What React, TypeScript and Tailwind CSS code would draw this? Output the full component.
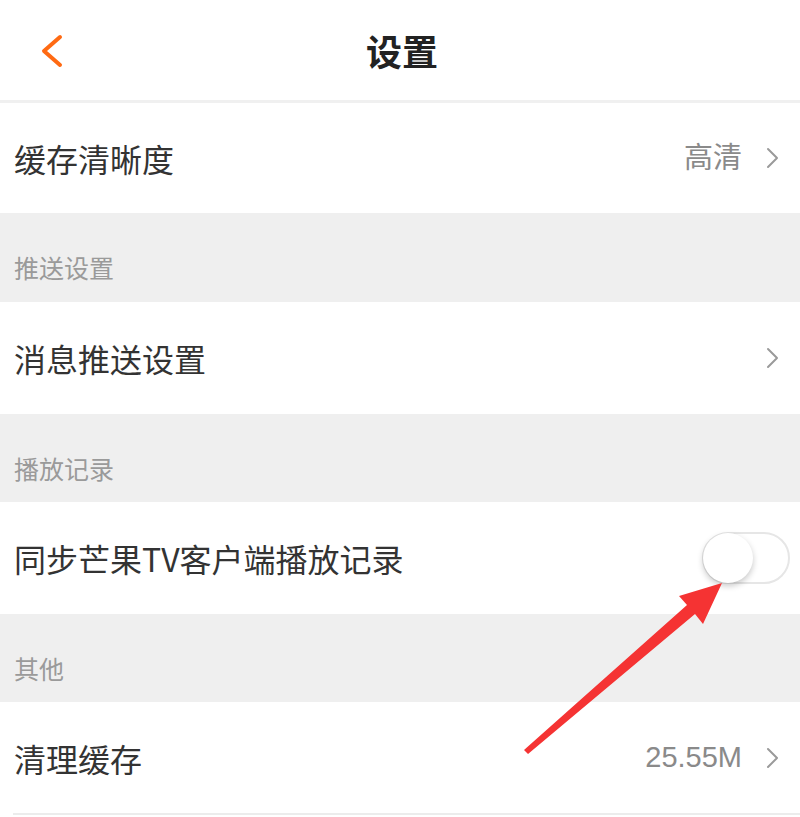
import { useState } from 'react'

const font = { fontFamily: '"Noto Sans CJK SC", "Noto Sans", sans-serif' }
const valueFont = { fontFamily: '"Liberation Sans", "Noto Sans CJK SC", sans-serif' }

function Chevron() {
  return (
    <svg width="14" height="22" viewBox="0 0 14 22" className="ml-[24px] shrink-0">
      <path d="M2 2 L11 11 L2 20" fill="none" stroke="#9a9a9a" strokeWidth="2" strokeLinecap="round" strokeLinejoin="round" />
    </svg>
  )
}

function SectionLabel({ label, h }: { label: string; h: string }) {
  return (
    <div className={`${h} bg-[#efefef] pl-[14px] pt-[42px]`}>
      <p className="text-[25px] leading-none text-[#9a9a9a]">{label}</p>
    </div>
  )
}

function Row({ label, value, arrow = true, h, children }: { label: string; value?: string; arrow?: boolean; h: string; children?: React.ReactNode }) {
  return (
    <div className={`${h} flex items-center bg-white pl-[14px] pr-[20px]`}>
      <p className="flex-1 text-[32px] leading-none text-[#333]">{label}</p>
      {value ? (
        <span className="text-[29px] leading-none text-[#8a8a8a]" style={valueFont}>
          {value}
        </span>
      ) : null}
      {arrow ? <Chevron /> : null}
      {children}
    </div>
  )
}

export default function App() {
  const [sync, setSync] = useState(false)

  return (
    <div className="relative h-[817px] w-[800px] overflow-hidden bg-white" style={font}>
      <header className="relative flex h-[100px] items-center justify-center">
        <button type="button" className="absolute left-[40px] top-[34px]">
          <svg width="24" height="34" viewBox="0 0 24 34">
            <path d="M20 3 L4 17 L20 31" fill="none" stroke="#ff6a13" strokeWidth="4" strokeLinecap="round" strokeLinejoin="round" />
          </svg>
        </button>
        <h1 className="ml-[4px] text-[36px] font-bold leading-none text-[#222]">设置</h1>
      </header>
      <div className="h-[3px] bg-[#f0f0f0]" />

      <Row label="缓存清晰度" value="高清" h="h-[110px]" />
      <SectionLabel label="推送设置" h="h-[89px]" />
      <Row label="消息推送设置" h="h-[112px]" />
      <SectionLabel label="播放记录" h="h-[88px]" />
      <Row label="同步芒果TV客户端播放记录" arrow={false} h="h-[112px]">
        <button
          type="button"
          onClick={() => setSync(!sync)}
          className={`relative mr-[-10px] h-[52px] w-[88px] rounded-full border-2 ${sync ? 'border-[#ff6a13] bg-[#ff6a13]' : 'border-[#e6e6e6] bg-white'}`}
        >
          <span
            className={`absolute top-[-1px] h-[50px] w-[50px] rounded-full bg-white shadow-[0_3px_6px_rgba(0,0,0,0.22)] ${sync ? 'left-[34px]' : 'left-[-1px]'}`}
          />
        </button>
      </Row>
      <SectionLabel label="其他" h="h-[88px]" />
      <Row label="清理缓存" value="25.55M" h="h-[111px]" />
      <div className="ml-[13px] h-[2px] bg-[#ececec]" />

      <svg className="pointer-events-none absolute inset-0" width="800" height="817" viewBox="0 0 800 817">
        <polygon points="524,750 687,605 679,596 722,583 703,624 695,614 528,754" fill="#f53333" />
      </svg>
    </div>
  )
}
